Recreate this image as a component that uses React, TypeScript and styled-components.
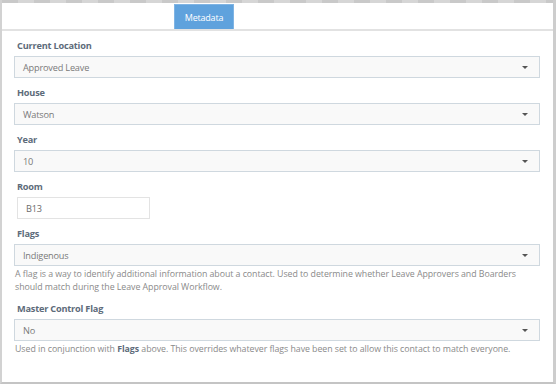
import React from "react";
import styled, { createGlobalStyle } from "styled-components";

const GlobalStyle = createGlobalStyle`
  html, body {
    margin: 0;
    padding: 0;
    background: #ffffff;
  }
  body {
    font-family: "Open Sans", "DejaVu Sans", sans-serif;
  }
`;

const Frame = styled.div`
  box-sizing: border-box;
  width: 556px;
  height: 384px;
  border-left: 2px solid #d2d2d2;
  border-right: 3px solid #cdcdcd;
  border-bottom: 2px solid #c4c4c4;
  padding-top: 3px;
  position: relative;
  background: #ffffff;
  overflow: hidden;

  &::before {
    content: "";
    position: absolute;
    left: 0;
    right: 0;
    top: 0;
    height: 3px;
    background: repeating-linear-gradient(
      90deg,
      #c9c9c9 0 16px,
      #d6d6d6 16px 32px
    );
  }
`;

const TabBar = styled.div`
  display: flex;
  padding-left: 172px;
  padding-top: 1px;
  border-bottom: 2px solid #e2e2e2;
  height: 25px;
`;

const Tab = styled.div<{ $active?: boolean }>`
  box-sizing: border-box;
  width: 60px;
  height: 25px;
  display: flex;
  align-items: center;
  justify-content: center;
  font-size: 9px;
  letter-spacing: -0.2px;
  color: ${(p) => (p.$active ? "#ffffff" : "#5d6b7a")};
  background: ${(p) => (p.$active ? "#5fa2dd" : "transparent")};
  border: 1px solid ${(p) => (p.$active ? "#7fb4e4" : "transparent")};
  border-bottom: none;
`;

const Body = styled.div`
  display: flex;
  flex-direction: column;
  padding: 8px 13px 0 12px;
`;

const Group = styled.div`
  display: flex;
  flex-direction: column;
  margin-bottom: 8px;
`;

const Label = styled.div`
  font-size: 9.2px;
  letter-spacing: -0.2px;
  font-weight: 700;
  color: #5d6b7a;
  line-height: 14px;
  padding-left: 3px;
  margin-bottom: 3px;
`;

const Select = styled.div`
  box-sizing: border-box;
  height: 22px;
  display: flex;
  align-items: center;
  justify-content: space-between;
  padding: 0 11px 0 8px;
  background: #f9f9f9;
  border: 1px solid #cfd8df;
  font-size: 9.2px;
  letter-spacing: -0.2px;
  color: #7a7a7a;
`;

const Caret = styled.span`
  width: 0;
  height: 0;
  border-left: 3px solid transparent;
  border-right: 3px solid transparent;
  border-top: 3px solid #555555;
`;

const TextInput = styled.div`
  box-sizing: border-box;
  width: 133px;
  height: 22px;
  margin-left: 3px;
  display: flex;
  align-items: center;
  padding-left: 8px;
  border: 1px solid #e3e3e3;
  background: #ffffff;
  font-size: 9.2px;
  letter-spacing: -0.2px;
  color: #6b6b6b;
`;

const Help = styled.div`
  max-width: 502px;
  font-size: 8.8px;
  letter-spacing: -0.05px;
  line-height: 13px;
  color: #8a8a8a;
  padding: 2px 0 0 1px;

  b {
    color: #5d6b7a;
    font-weight: 700;
  }
`;

const SelectField = ({ value }: { value: string }) => (
  <Select>
    <span>{value}</span>
    <Caret />
  </Select>
);

export default function App() {
  return (
    <>
      <GlobalStyle />
      <Frame>
        <TabBar>
          <Tab $active>Metadata</Tab>
        </TabBar>
        <Body>
          <Group>
            <Label>Current Location</Label>
            <SelectField value="Approved Leave" />
          </Group>
          <Group>
            <Label>House</Label>
            <SelectField value="Watson" />
          </Group>
          <Group>
            <Label>Year</Label>
            <SelectField value="10" />
          </Group>
          <Group>
            <Label>Room</Label>
            <TextInput>B13</TextInput>
          </Group>
          <Group>
            <Label>Flags</Label>
            <SelectField value="Indigenous" />
            <Help>
              A flag is a way to identify additional information about a
              contact. Used to determine whether Leave Approvers and Boarders
              should match during the Leave Approval Workflow.
            </Help>
          </Group>
          <Group>
            <Label>Master Control Flag</Label>
            <SelectField value="No" />
            <Help>
              Used in conjunction with <b>Flags</b> above. This overrides
              whatever flags have been set to allow this contact to match
              everyone.
            </Help>
          </Group>
        </Body>
      </Frame>
    </>
  );
}
